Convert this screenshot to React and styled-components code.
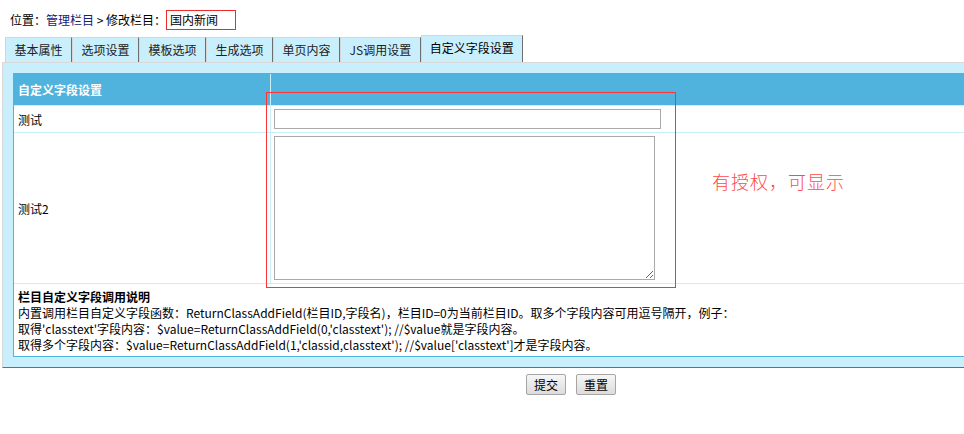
import React from 'react';
import styled, { createGlobalStyle } from 'styled-components';

const GlobalStyle = createGlobalStyle`
  html, body {
    margin: 0;
    padding: 0;
    background: #fff;
    overflow: hidden;
  }
  body {
    font-family: "Noto Sans CJK SC", "Noto Sans", sans-serif;
    font-size: 12px;
    color: #000;
  }
`;

const tabs = ['基本属性', '选项设置', '模板选项', '生成选项', '单页内容', 'JS调用设置', '自定义字段设置'];

const App = () => (
  <Page>
    <GlobalStyle />
    <Breadcrumb>
      位置：<NavLink>管理栏目</NavLink>&nbsp;&gt;&nbsp;修改栏目：
      <Marked>国内新闻</Marked>
    </Breadcrumb>

    <TabBar>
      {tabs.map((t, i) => (
        <Tab key={t} active={i === tabs.length - 1}>{t}</Tab>
      ))}
    </TabBar>

    <Panel>
      <FieldTable>
        <HeadRow>
          <HeadCell>自定义字段设置</HeadCell>
          <HeadCell />
        </HeadRow>
        <Row>
          <LabelCell>测试</LabelCell>
          <ValueCell>
            <TextInput />
          </ValueCell>
        </Row>
        <Row>
          <LabelCell>测试2</LabelCell>
          <ValueCell>
            <TextArea />
          </ValueCell>
        </Row>
        <Notes>
          <NoteTitle>栏目自定义字段调用说明</NoteTitle>
          <div>内置调用栏目自定义字段函数：ReturnClassAddField(栏目ID,字段名)，栏目ID=0为当前栏目ID。取多个字段内容可用逗号隔开，例子：</div>
          <div>取得'classtext'字段内容：$value=ReturnClassAddField(0,'classtext'); //$value就是字段内容。</div>
          <div>取得多个字段内容：$value=ReturnClassAddField(1,'classid,classtext'); //$value['classtext']才是字段内容。</div>
        </Notes>
      </FieldTable>
    </Panel>

    <ButtonBar>
      <Button>提交</Button>
      <Button>重置</Button>
    </ButtonBar>

    <MarkBox />
    <MarkNote>有授权，可显示</MarkNote>
  </Page>
);

const Page = styled.div`
  position: relative;
  width: 1138px;
  padding: 10px 0 0 2px;
`;

const Breadcrumb = styled.div`
  display: flex;
  align-items: center;
  height: 20px;
  padding-left: 8px;
  line-height: 20px;
`;

const NavLink = styled.span`
  color: #13237a;
`;

const Marked = styled.span`
  display: inline-block;
  height: 18px;
  line-height: 18px;
  padding: 0 17px 0 3px;
  border: 1px solid #ee2a2a;
`;

const TabBar = styled.div`
  display: flex;
  align-items: flex-end;
  height: 27px;
  margin-top: 5px;
  padding-left: 3px;
`;

const Tab = styled.div`
  height: ${({ active }) => (active ? '26px' : '24px')};
  line-height: ${({ active }) => (active ? '24px' : '23px')};
  padding: 0 ${({ active }) => (active ? '8px' : '8.5px')};
  background: #c9effc;
  color: ${({ active }) => (active ? '#000' : '#222')};
  border-top: 1px solid #d6d6d6;
  border-left: 1px solid #d6d6d6;
  border-right: 1px solid #6e6e6e;
  white-space: nowrap;
`;

const Panel = styled.div`
  background: #c9effc;
  border-top: 1px solid #d9d9d9;
  border-left: 1px solid #d9d9d9;
  border-bottom: 1px solid #6e6e6e;
  padding: 10px 0 10px 10px;
`;

const FieldTable = styled.div`
  background: #fff;
  border: 1px solid #4fb3de;
  border-right: none;
`;

const HeadRow = styled.div`
  display: grid;
  grid-template-columns: 256px 1fr;
  height: 31px;
  background: #4fb3de;
`;

const HeadCell = styled.div`
  display: flex;
  align-items: center;
  padding-left: 4px;
  color: #fff;
  font-weight: bold;
  & + & {
    border-left: 1px solid #c9effc;
  }
`;

const Row = styled.div`
  display: grid;
  grid-template-columns: 256px 1fr;
  border-top: 1px solid #c9effc;
`;

const LabelCell = styled.div`
  display: flex;
  align-items: center;
  padding-left: 4px;
`;

const ValueCell = styled.div`
  border-left: 1px solid #c9effc;
  padding: 3px;
`;

const TextInput = styled.input`
  display: block;
  box-sizing: border-box;
  width: 387px;
  height: 20px;
  border: 1px solid #a9a9a9;
  margin: 0;
`;

const TextArea = styled.textarea`
  display: block;
  box-sizing: border-box;
  width: 381px;
  height: 144px;
  border: 1px solid #a9a9a9;
  margin: 0;
`;

const Notes = styled.div`
  border-top: 1px solid #c9effc;
  padding: 5px 4px 3px 4px;
  line-height: 16px;
`;

const NoteTitle = styled.div`
  font-weight: bold;
`;

const ButtonBar = styled.div`
  display: flex;
  justify-content: center;
  gap: 10px;
  padding-top: 6px;
`;

const Button = styled.button`
  width: 40px;
  height: 21px;
  padding: 0;
  font-family: inherit;
  font-size: 12px;
  color: #000;
  background: linear-gradient(#f6f6f6, #dcdcdc);
  border: 1px solid #a5a5a5;
  border-radius: 2px;
`;

const MarkBox = styled.div`
  position: absolute;
  left: 266px;
  top: 92px;
  width: 408px;
  height: 194px;
  border: 1px solid #f33;
`;

const MarkNote = styled.div`
  position: absolute;
  left: 712px;
  top: 168px;
  font-size: 18px;
  font-weight: 300;
  color: #ff4a4a;
  letter-spacing: 1px;
`;

export default App;
